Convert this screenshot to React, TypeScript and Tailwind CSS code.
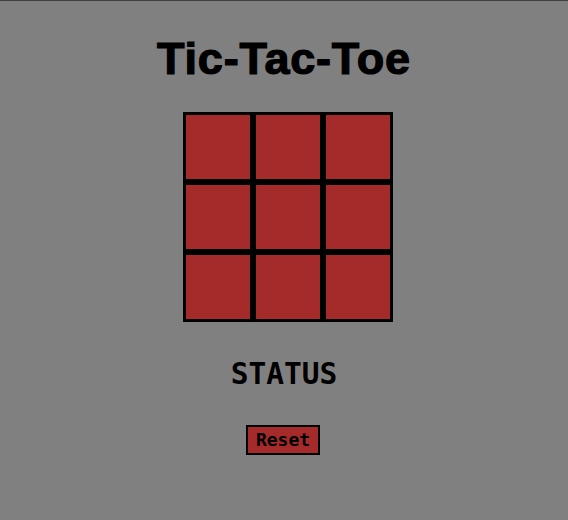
import React, { useState } from "react";

const Cell = ({ value, onClick }: { value: string; onClick: () => void }) => {
  return (
    <button
      onClick={onClick}
      className="w-[70px] h-[70px] bg-[#a52a2a] border-[3px] border-black flex items-center justify-center text-[40px] font-bold font-['DejaVu_Sans_Mono',monospace] text-black"
    >
      {value}
    </button>
  );
};

const App = () => {
  const [board, setBoard] = useState<string[]>(Array(9).fill(""));
  const [xNext, setXNext] = useState(true);

  const play = (i: number) => {
    if (board[i]) return;
    const next = [...board];
    next[i] = xNext ? "X" : "O";
    setBoard(next);
    setXNext(!xNext);
  };

  return (
    <div className="min-h-screen bg-[#808080] border-t border-[#404040] flex flex-col items-center">
      <h1 className="mt-[35px] text-[45px] leading-none tracking-[0.8px] font-bold font-['Liberation_Sans',Arial,sans-serif] text-black [-webkit-text-stroke:1.2px_black]">
        Tic-Tac-Toe
      </h1>
      <div className="mt-[31px] ml-[8px] grid grid-cols-3 w-[210px]">
        {board.map((v, i) => (
          <Cell key={i} value={v} onClick={() => play(i)} />
        ))}
      </div>
      <h2 className="mt-[38px] text-[29.5px] leading-none font-bold font-['DejaVu_Sans_Mono',monospace] text-black">
        STATUS
      </h2>
      <button
        onClick={() => {
          setBoard(Array(9).fill(""));
          setXNext(true);
        }}
        className="mt-[35px] mr-[2px] h-[30px] px-2 border-2 border-black bg-[#a52a2a] flex items-center text-[18px] leading-none font-bold font-['DejaVu_Sans_Mono',monospace] text-black"
      >
        Reset
      </button>
    </div>
  );
};

export default App;
